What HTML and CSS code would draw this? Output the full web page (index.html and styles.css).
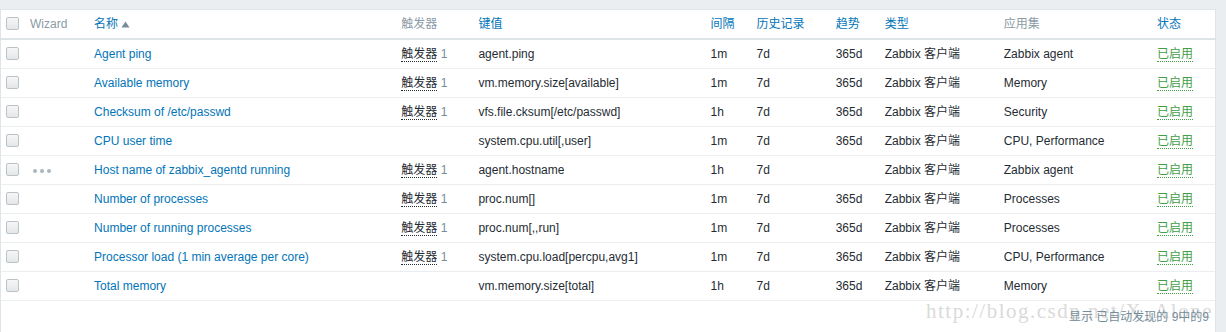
FILE: index.html
```html
<!DOCTYPE html>
<html>
<head>
<meta charset="utf-8">
<link rel="stylesheet" href="styles.css">
</head>
<body>
<div class="panel">
  <table class="list">
    <colgroup>
      <col class="c-chk"><col class="c-wiz"><col class="c-name"><col class="c-trig"><col class="c-key"><col class="c-int"><col class="c-hist"><col class="c-trend"><col class="c-type"><col class="c-app"><col class="c-status">
    </colgroup>
    <thead>
      <tr>
        <th><span class="cb"></span></th>
        <th class="grey">Wizard</th>
        <th class="blue">名称<svg class="sort" width="9" height="7" viewBox="0 0 9 7"><path d="M0.5 6.5 L4.5 0.5 L8.5 6.5 Z" fill="#768d99"/></svg></th>
        <th class="grey">触发器</th>
        <th class="blue">键值</th>
        <th class="blue">间隔</th>
        <th class="blue">历史记录</th>
        <th class="blue">趋势</th>
        <th class="blue">类型</th>
        <th class="grey">应用集</th>
        <th class="blue">状态</th>
      </tr>
    </thead>
    <tbody>
      <tr><td><span class="cb"></span></td><td></td><td class="link">Agent ping</td><td><span class="dot">触发器</span> <span class="cnt">1</span></td><td>agent.ping</td><td>1m</td><td>7d</td><td>365d</td><td>Zabbix 客户端</td><td>Zabbix agent</td><td><span class="on">已启用</span></td></tr>
      <tr><td><span class="cb"></span></td><td></td><td class="link">Available memory</td><td><span class="dot">触发器</span> <span class="cnt">1</span></td><td>vm.memory.size[available]</td><td>1m</td><td>7d</td><td>365d</td><td>Zabbix 客户端</td><td>Memory</td><td><span class="on">已启用</span></td></tr>
      <tr><td><span class="cb"></span></td><td></td><td class="link">Checksum of /etc/passwd</td><td><span class="dot">触发器</span> <span class="cnt">1</span></td><td>vfs.file.cksum[/etc/passwd]</td><td>1h</td><td>7d</td><td>365d</td><td>Zabbix 客户端</td><td>Security</td><td><span class="on">已启用</span></td></tr>
      <tr><td><span class="cb"></span></td><td></td><td class="link">CPU user time</td><td></td><td>system.cpu.util[,user]</td><td>1m</td><td>7d</td><td>365d</td><td>Zabbix 客户端</td><td>CPU, Performance</td><td><span class="on">已启用</span></td></tr>
      <tr><td><span class="cb"></span></td><td><span class="more"><i></i><i></i><i></i></span></td><td class="link">Host name of zabbix_agentd running</td><td><span class="dot">触发器</span> <span class="cnt">1</span></td><td>agent.hostname</td><td>1h</td><td>7d</td><td></td><td>Zabbix 客户端</td><td>Zabbix agent</td><td><span class="on">已启用</span></td></tr>
      <tr><td><span class="cb"></span></td><td></td><td class="link">Number of processes</td><td><span class="dot">触发器</span> <span class="cnt">1</span></td><td>proc.num[]</td><td>1m</td><td>7d</td><td>365d</td><td>Zabbix 客户端</td><td>Processes</td><td><span class="on">已启用</span></td></tr>
      <tr><td><span class="cb"></span></td><td></td><td class="link">Number of running processes</td><td><span class="dot">触发器</span> <span class="cnt">1</span></td><td>proc.num[,,run]</td><td>1m</td><td>7d</td><td>365d</td><td>Zabbix 客户端</td><td>Processes</td><td><span class="on">已启用</span></td></tr>
      <tr><td><span class="cb"></span></td><td></td><td class="link">Processor load (1 min average per core)</td><td><span class="dot">触发器</span> <span class="cnt">1</span></td><td>system.cpu.load[percpu,avg1]</td><td>1m</td><td>7d</td><td>365d</td><td>Zabbix 客户端</td><td>CPU, Performance</td><td><span class="on">已启用</span></td></tr>
      <tr><td><span class="cb"></span></td><td></td><td class="link">Total memory</td><td></td><td>vm.memory.size[total]</td><td>1h</td><td>7d</td><td>365d</td><td>Zabbix 客户端</td><td>Memory</td><td><span class="on">已启用</span></td></tr>
    </tbody>
  </table>
  <div class="footer">
    <span class="watermark">http://blog.csdn.net/X_Alone</span>
    <span class="paging">显示 已自动发现的 9中的9</span>
  </div>
</div>
</body>
</html>
```
FILE: styles.css
```css
html, body {
  margin: 0;
  padding: 0;
  background: #ebeef1;
}
body {
  padding-top: 9px;
  font-family: "Liberation Sans", Arial, "Noto Sans CJK SC", sans-serif;
  font-size: 12px;
  color: #1f2c33;
}
.panel {
  width: 1216px;
  background: #fff;
  border: 1px solid #dfe4e7;
  border-bottom: none;
  height: 323px;
  box-sizing: border-box;
}
.list {
  width: 1214px;
  table-layout: fixed;
  border-collapse: collapse;
}
.c-chk { width: 24px; }
.c-wiz { width: 64px; }
.c-name { width: 307px; }
.c-trig { width: 77px; }
.c-key { width: 232px; }
.c-int { width: 46px; }
.c-hist { width: 79px; }
.c-trend { width: 49px; }
.c-type { width: 119px; }
.c-app { width: 153px; }
.c-status { width: 63px; }

.list th, .list td {
  padding: 0 5px;
  height: 28px;
  text-align: left;
  vertical-align: middle;
  white-space: nowrap;
  overflow: hidden;
  line-height: 16px;
}
.list th {
  font-weight: normal;
  border-bottom: 2px solid #dfe4e7;
}
.list td {
  border-bottom: 1px solid #ebeef0;
}
.grey { color: #8a9ba5; }
.blue { color: #0275b8; }
.sort {
  margin-left: 3px;
  vertical-align: 0;
}
.link { color: #0275b8; }
.cb {
  display: inline-block;
  width: 11px;
  height: 11px;
  border: 1px solid #bcc3c8;
  border-radius: 2px;
  background: linear-gradient(#f5f6f7, #e4e7e9);
  vertical-align: middle;
  position: relative;
  top: -1px;
}
.dot {
  border-bottom: 1px dotted #1f2c33;
}
.cnt { color: #768d99; }
.on {
  color: #429e47;
  border-bottom: 1px dotted #429e47;
}
.more {
  display: inline-flex;
  gap: 3px;
  margin-left: 3px;
  vertical-align: middle;
}
.more i {
  display: block;
  width: 4px;
  height: 4px;
  border-radius: 50%;
  background: #aab6bd;
}
.footer {
  position: relative;
  display: flex;
  justify-content: flex-end;
  padding: 8px 6px 0 0;
}
.paging {
  position: relative;
  color: #768d99;
  line-height: 16px;
}
.watermark {
  position: absolute;
  right: 2px;
  top: -2px;
  font-family: "Liberation Serif", "Times New Roman", serif;
  font-size: 21px;
  letter-spacing: 1.5px;
  color: #dadada;
  white-space: nowrap;
}
```
